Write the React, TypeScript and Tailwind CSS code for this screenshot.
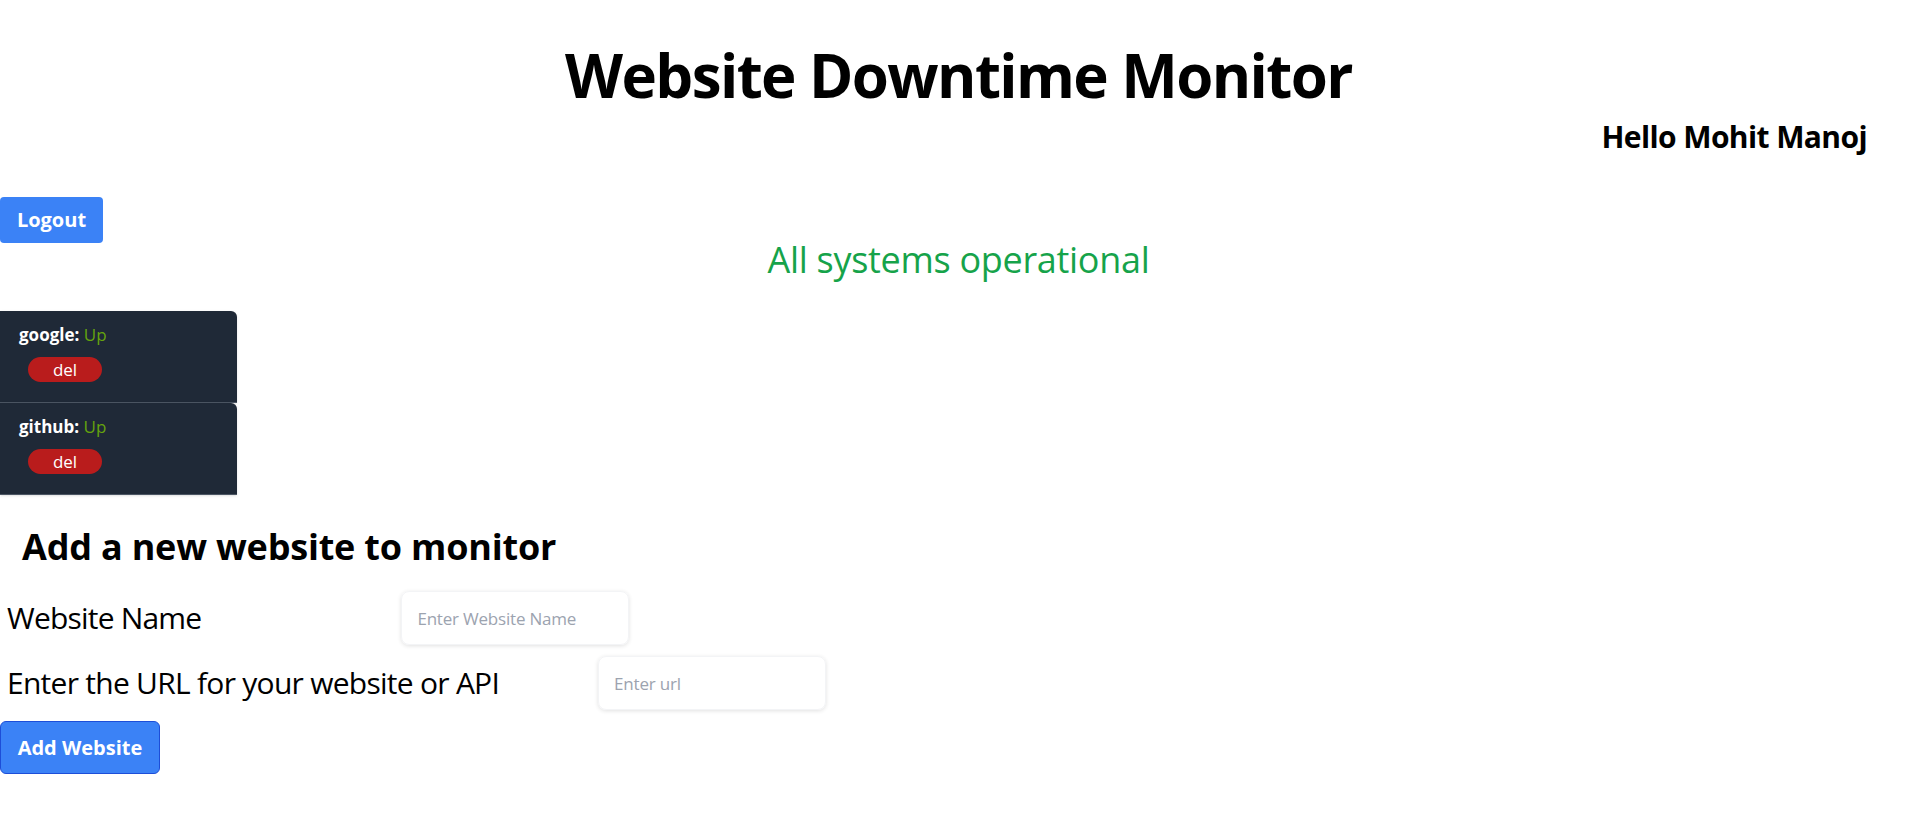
import React, { useState } from 'react';

type Site = { name: string; status: string };

const App: React.FC = () => {
  const [sites] = useState<Site[]>([
    { name: 'google', status: 'Up' },
    { name: 'github', status: 'Up' },
  ]);
  const [name, setName] = useState('');
  const [url, setUrl] = useState('');

  return (
    <div className="min-h-screen bg-white text-black font-['Open_Sans','Noto_Sans',sans-serif]">
      <h1 className="pt-[45px] text-center text-6xl leading-[60px] font-bold tracking-[-1.6px]">Website Downtime Monitor</h1>

      <div className="flex justify-end pr-[50px] mt-[14px]">
        <h2 className="text-3xl leading-9 font-bold tracking-[-0.6px]">Hello Mohit Manoj</h2>
      </div>

      <button className="mt-[42px] flex h-[46px] w-[103px] items-center justify-center rounded bg-[#3b82f6] text-xl font-bold text-white">
        Logout
      </button>

      <p className="mt-[2px] text-center text-4xl leading-[30px] tracking-[-0.3px] text-[#16a34a]">All systems operational</p>

      {/* monitored sites */}
      <div className="mt-[36px] flex flex-col">
        {sites.map((s) => (
          <div
            key={s.name}
            className="h-[92px] w-[237px] rounded-tr-md border-b border-[#4b5563] bg-[#1f2937] pl-[19px] pt-[12px] shadow"
          >
            <div className="text-[17px] leading-6 text-white">
              <span className="font-bold">{s.name}:</span> <span className="text-[#65a30d]">{s.status}</span>
            </div>
            <button className="ml-[9px] mt-[10px] flex h-[25px] w-[74px] items-center justify-center rounded-full bg-[#b91c1c] text-[17px] text-white">
              del
            </button>
          </div>
        ))}
      </div>

      {/* add form */}
      <h2 className="mt-[32px] pl-[22px] text-4xl leading-10 font-bold tracking-[-0.2px]">Add a new website to monitor</h2>

      <div className="mt-[24px] flex flex-col gap-[11px]">
        <div className="flex items-center pl-[7px]">
          <label className="text-3xl tracking-[-0.8px]">Website Name</label>
          <input
            value={name}
            onChange={(e) => setName(e.target.value)}
            placeholder="Enter Website Name"
            className="ml-[200px] h-[54px] w-[228px] rounded-lg border border-[#f3f4f6] pl-[15px] pr-4 text-[17px] tracking-[-0.2px] shadow-[0_1px_4px_rgba(0,0,0,0.12)] outline-none placeholder:text-[#9ca3af]"
          />
        </div>
        <div className="flex items-center pl-[7px]">
          <label className="text-3xl tracking-[-0.73px]">Enter the URL for your website or API</label>
          <input
            value={url}
            onChange={(e) => setUrl(e.target.value)}
            placeholder="Enter url"
            className="ml-[99px] h-[54px] w-[228px] rounded-lg border border-[#f3f4f6] pl-[15px] pr-4 text-[17px] tracking-[-0.2px] shadow-[0_1px_4px_rgba(0,0,0,0.12)] outline-none placeholder:text-[#9ca3af]"
          />
        </div>
      </div>

      <button className="mt-[11px] flex h-[53px] w-[160px] items-center justify-center rounded-md border border-[#1d4ed8] bg-[#3b82f6] text-xl font-bold text-white">
        Add Website
      </button>
    </div>
  );
};

export default App;
